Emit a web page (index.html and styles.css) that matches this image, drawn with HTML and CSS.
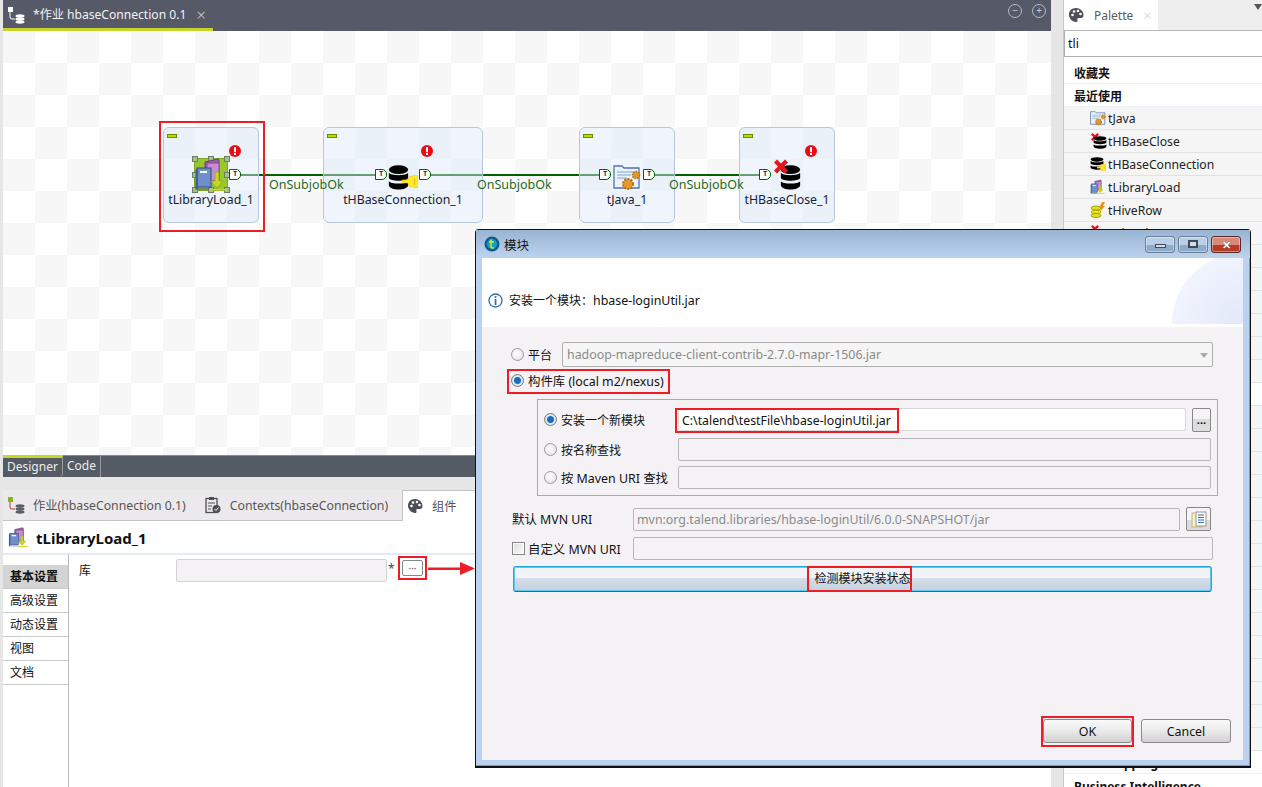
FILE: index.html
```html
<!DOCTYPE html>
<html lang="en">
<head>
  <meta charset="UTF-8" />
  <title>Talend Studio</title>
  <link rel="stylesheet" href="styles.css">
</head>
<body>

<svg class="defs" width="0" height="0">
  <symbol id="i-db" viewBox="0 0 24 24" preserveAspectRatio="none">
    <ellipse cx="12" cy="4.500" rx="11" ry="4.200" fill="#000"/>
    <path d="M1 7.500c2 3 20 3 22 0v5c-2 3.500-20 3.500-22 0z" fill="#000"/>
    <path d="M1 15.500c2 3 20 3 22 0v4c-1 5.500-21 5.500-22 0z" fill="#000"/>
  </symbol>
  <symbol id="i-key" viewBox="0 0 17 13">
    <path d="M0 5h6l2-4h3l1-1h4l1 1v11l-1 1h-4l-1-1H8L6 8H0z" fill="#ffe82e" stroke="#e0c400" stroke-width=".6"/>
    <rect x="13" y="3" width="1" height="7" fill="#d8bc00"/>
  </symbol>
  <symbol id="i-x" viewBox="0 0 14 14">
    <path d="M3 0l4 4 4-4 3 3-4 4 4 4-3 3-4-4-4 4-3-3 4-4-4-4z" fill="#e8141c"/>
  </symbol>
  <symbol id="i-err" viewBox="0 0 12 12">
    <circle cx="6" cy="6" r="6" fill="#ee0a12"/>
    <rect x="5" y="2" width="2" height="5.200" fill="#fff"/>
    <rect x="5" y="8" width="2" height="2" fill="#fff"/>
  </symbol>
  <symbol id="i-book" viewBox="0 0 36 34">
    <path d="M11 4l13-3 1 1v19H11z" fill="#9a5fa8" stroke="#6d4178"/>
    <path d="M13 5h12v18H13z" fill="#c98bd4" stroke="#80508c"/>
    <rect x="3" y="10" width="14" height="19" fill="#6e8fca" stroke="#35497a"/>
    <path d="M1.500 11.500h2v19h12v1H1.500z" fill="#3f5a94"/>
    <rect x="6" y="13" width="7" height="2" fill="#fff"/>
    <path d="M21 14h4v9h4l-6 7-6-7h4z" fill="#c8d62a" stroke="#93a012" stroke-width=".7"/>
    <rect x="15" y="31" width="18" height="1.500" fill="#c8d62a"/>
  </symbol>
  <symbol id="i-java" viewBox="0 0 28 28">
    <path d="M1 3h8l2 2h15v20H1z" fill="#eef3fb" stroke="#4f74ad" stroke-width="1.300"/>
    <path d="M4 9h16M4 12h14M4 15h10" stroke="#7f9fd0"/>
    <circle cx="15" cy="21" r="5" fill="#e39a2d" stroke="#b96f10" stroke-width="2" stroke-dasharray="2 1.200"/>
    <circle cx="23" cy="12" r="3.500" fill="#e39a2d" stroke="#b96f10" stroke-width="1.600" stroke-dasharray="1.600 1"/>
  </symbol>
  <symbol id="i-hive" viewBox="0 0 16 16">
    <ellipse cx="6" cy="6" rx="5" ry="2" fill="#e4e01c" stroke="#a7a30b"/>
    <ellipse cx="6" cy="10" rx="5" ry="2" fill="#e4e01c" stroke="#a7a30b"/>
    <ellipse cx="6" cy="13.500" rx="5" ry="2" fill="#e4e01c" stroke="#a7a30b"/>
    <path d="M12 0l3 0-2 4h2l-5 6 1-4H9z" fill="#f09020"/>
  </symbol>
  <symbol id="i-palette" viewBox="0 0 16 16">
    <path d="M8 1C4 1 1 3.800 1 7.500S4 15 8 15c1.500 0 1.800-1 1.400-2-.4-1.200.2-2 1.400-2H13c1.500 0 2.500-1 2.500-3C15.500 4 12 1 8 1z" fill="#4c4f57"/>
    <circle cx="4.500" cy="8" r="1.300" fill="#fff"/>
    <circle cx="6" cy="4.500" r="1.300" fill="#fff"/>
    <circle cx="10" cy="4" r="1.300" fill="#fff"/>
    <circle cx="12.500" cy="7" r="1.300" fill="#fff"/>
  </symbol>
  <symbol id="i-job" viewBox="0 0 18 18">
    <rect x="1" y="1" width="5" height="5" class="j-head"/>
    <path d="M3 6v5q0 2 2 2h3" class="j-line"/>
    <ellipse cx="13" cy="10" rx="4.500" ry="1.700" class="j-disc"/>
    <ellipse cx="13" cy="13" rx="4.500" ry="1.700" class="j-disc"/>
    <ellipse cx="13" cy="16" rx="4.500" ry="1.700" class="j-disc"/>
  </symbol>
</svg>

<div class="app">
  <div class="edge"></div>

  <div class="left">
    <div class="editor-tabs">
      <div class="editor-tab">
        <svg class="tab-icon" width="18" height="18"><use href="#i-job"/></svg>
        <span>*作业 hbaseConnection 0.1</span>
        <span class="tab-close">×</span>
      </div>
      <div class="editor-ctrl">
        <span class="round-btn">−</span>
        <span class="round-btn">+</span>
      </div>
    </div>

    <div class="canvas">
      <div class="wire wire-1"></div>
      <div class="wire wire-2"></div>
      <div class="wire wire-3"></div>

      <div class="node node-1">
        <span class="flag"></span>
        <label class="name">tLibraryLoad_1</label>
      </div>
      <div class="node node-2">
        <span class="flag"></span>
        <label class="name">tHBaseConnection_1</label>
      </div>
      <div class="node node-3">
        <span class="flag"></span>
        <label class="name">tJava_1</label>
      </div>
      <div class="node node-4">
        <span class="flag"></span>
        <label class="name">tHBaseClose_1</label>
      </div>

      <div class="select-box">
        <i class="h h1"></i><i class="h h2"></i><i class="h h3"></i><i class="h h4"></i>
        <i class="h h5"></i><i class="h h6"></i><i class="h h7"></i><i class="h h8"></i>
      </div>
      <svg class="ico ico-book" width="36" height="34"><use href="#i-book"/></svg>
      <svg class="ico ico-db2" width="21" height="25"><use href="#i-db"/></svg>
      <svg class="ico ico-key" width="16" height="13"><use href="#i-key"/></svg>
      <svg class="ico ico-java" width="28" height="28"><use href="#i-java"/></svg>
      <svg class="ico ico-db4" width="21" height="25"><use href="#i-db"/></svg>
      <svg class="ico ico-x4" width="14" height="15"><use href="#i-x"/></svg>
      <svg class="ico err-1" width="12" height="12"><use href="#i-err"/></svg>
      <svg class="ico err-2" width="12" height="12"><use href="#i-err"/></svg>
      <svg class="ico err-4" width="12" height="12"><use href="#i-err"/></svg>

      <span class="port port-1">T</span>
      <span class="port port-2">T</span>
      <span class="port port-3">T</span>
      <span class="port port-4">T</span>
      <span class="port port-5">T</span>
      <span class="port port-6">T</span>

      <span class="link-label link-1">OnSubjobOk</span>
      <span class="link-label link-2">OnSubjobOk</span>
      <span class="link-label link-3">OnSubjobOk</span>

      <div class="red-frame"></div>
    </div>

    <div class="sub-tabs">
      <span class="sub-tab active">Designer</span>
      <span class="sub-tab">Code</span>
    </div>
    <div class="spacer"></div>

    <div class="view-tabs">
      <div class="view-tab">
        <svg width="18" height="18" class="job-small"><use href="#i-job"/></svg>
        <span>作业(hbaseConnection 0.1)</span>
      </div>
      <div class="view-tab">
        <svg width="18" height="18" viewBox="0 0 18 18">
          <rect x="2" y="2.500" width="11" height="14" fill="none" stroke="#4c4f57" stroke-width="1.300"/>
          <rect x="5" y="1" width="5" height="3" fill="#4c4f57"/>
          <path d="M4 7h7M4 10h4M4 13h3" stroke="#4c4f57"/>
          <circle cx="12.500" cy="13" r="4" fill="#4c4f57"/>
          <path d="M10.500 13l1.500 1.500 2.500-3" fill="none" stroke="#fff"/>
        </svg>
        <span>Contexts(hbaseConnection)</span>
      </div>
      <div class="view-tab current">
        <svg width="16" height="16"><use href="#i-palette"/></svg>
        <span>组件</span>
      </div>
    </div>

    <div class="comp-title">
      <svg width="22" height="21"><use href="#i-book"/></svg>
      <span>tLibraryLoad_1</span>
    </div>

    <div class="comp-body">
      <ul class="side-tabs">
        <li class="on">基本设置</li>
        <li>高级设置</li>
        <li>动态设置</li>
        <li>视图</li>
        <li>文档</li>
      </ul>
      <div class="comp-main">
        <span class="comp-label">库</span>
        <div class="comp-input"></div>
        <span class="star">*</span>
        <span class="mark comp-mark"><button class="mini-btn">···</button></span>
        <svg class="arrow" width="47" height="14" viewBox="0 0 47 14">
          <rect x="0" y="5.500" width="36" height="2.500" fill="#ee1c25"/>
          <path d="M32 0l15 6.500L32 13z" fill="#ee1c25"/>
        </svg>
      </div>
    </div>
  </div>

  <div class="strip"></div>

  <div class="palette">
    <div class="pal-tabs">
      <div class="pal-tab">
        <svg width="16" height="16"><use href="#i-palette"/></svg>
        <span>Palette</span>
        <span class="pal-close">×</span>
      </div>
      <span class="pal-menu"></span>
    </div>
    <div class="pal-search">tli</div>
    <div class="pal-head first">收藏夹</div>
    <div class="pal-head">最近使用</div>
    <ul class="pal-list">
      <li><svg width="16" height="16"><use href="#i-java"/></svg>tJava</li>
      <li><span class="stack"><svg class="s-x" width="8" height="8"><use href="#i-x"/></svg><svg class="s-db" width="14" height="13"><use href="#i-db"/></svg></span>tHBaseClose</li>
      <li><span class="stack"><svg class="s-db2" width="14" height="13"><use href="#i-db"/></svg><svg class="s-key" width="9" height="7"><use href="#i-key"/></svg></span>tHBaseConnection</li>
      <li><svg width="16" height="16"><use href="#i-book"/></svg>tLibraryLoad</li>
      <li><svg width="16" height="16"><use href="#i-hive"/></svg>tHiveRow</li>
      <li><span class="stack"><svg class="s-x" width="8" height="8"><use href="#i-x"/></svg></span>tHiveClose</li>
      <li></li><li></li><li></li><li></li><li></li><li></li>
      <li class="plain"></li>
      <li></li><li></li><li></li><li></li><li></li><li></li><li></li><li></li>
      <li></li><li></li><li></li><li></li><li></li><li></li><li></li>
    </ul>
    <div class="pal-head">Data Mapping</div>
    <div class="pal-head">Business Intelligence</div>
  </div>
</div>

<div class="dialog">
  <div class="dlg-title">
    <svg width="16" height="16" viewBox="0 0 16 16">
      <circle cx="8" cy="8" r="7.500" fill="#0d5c8f"/>
      <circle cx="8" cy="8" r="5" fill="#12a0c8"/>
      <path d="M7 3.500v7q0 2 3 1.500M5 6h5" fill="none" stroke="#e8e020" stroke-width="1.500"/>
    </svg>
    <span class="dlg-name">模块</span>
    <span class="win-btn"><i class="glyph-min"></i></span>
    <span class="win-btn"><i class="glyph-max"></i></span>
    <span class="win-btn close">✕</span>
  </div>
  <div class="dlg-client">
    <div class="dlg-head">
      <svg width="15" height="15" viewBox="0 0 15 15">
        <circle cx="7.500" cy="7.500" r="6.500" fill="#fff" stroke="#2a6fb0" stroke-width="1.300"/>
        <rect x="6.700" y="3" width="1.700" height="1.800" fill="#2a6fb0"/>
        <rect x="6.700" y="6" width="1.700" height="6" fill="#2a6fb0"/>
      </svg>
      <span>安装一个模块：<span class="latin">hbase-loginUtil.jar</span></span>
    </div>
    <div class="dlg-body">
      <div class="row row-platform">
        <label class="opt cjk"><i class="radio"></i>平台</label>
        <div class="combo">hadoop-mapreduce-client-contrib-2.7.0-mapr-1506.jar<i class="caret"></i></div>
      </div>
      <div class="row row-repo">
        <label class="opt mark repo-mark"><i class="radio on"></i>构件库 (local m2/nexus)</label>
      </div>

      <div class="group">
        <div class="g-row">
          <label class="opt g-opt cjk"><i class="radio on"></i>安装一个新模块</label>
          <div class="field white"><span class="mark path-mark">C:\talend\testFile\hbase-loginUtil.jar</span></div>
          <button class="mini-btn tall">...</button>
        </div>
        <div class="g-row r2">
          <label class="opt g-opt cjk"><i class="radio"></i>按名称查找</label>
          <div class="field"></div>
        </div>
        <div class="g-row r3">
          <label class="opt g-opt"><i class="radio"></i>按 Maven URI 查找</label>
          <div class="field"></div>
        </div>
      </div>

      <div class="row row-mvn">
        <span class="mvn-label">默认 MVN URI</span>
        <div class="field grey-text">mvn:org.talend.libraries/hbase-loginUtil/6.0.0-SNAPSHOT/jar</div>
        <button class="mini-btn copy">
          <svg width="16" height="17" viewBox="0 0 16 17">
            <rect x="1" y="2" width="10" height="14" fill="#f3efc8" stroke="#c5b577"/>
            <rect x="5" y="1" width="10" height="14" fill="#fbfbfb" stroke="#9a9a8a"/>
            <path d="M7 4h6M7 6.500h6M7 9h6M7 11.500h6" stroke="#3f6fc0"/>
          </svg>
        </button>
      </div>
      <div class="row row-custom">
        <label class="mvn-label check-label"><i class="check"></i>自定义 MVN URI</label>
        <div class="field"></div>
      </div>
      <button class="check-btn cjk"><span class="mark check-mark">检测模块安装状态</span></button>

      <div class="dlg-foot">
        <span class="mark ok-mark"><button class="push">OK</button></span>
        <button class="push cancel">Cancel</button>
      </div>
    </div>
  </div>
</div>

</body>
</html>
```

FILE: styles.css
```css
* {
  box-sizing: border-box;
}

body {
  margin: 0;
  width: 1262px;
  height: 787px;
  overflow: hidden;
  font-family: "Noto Sans", "Noto Sans CJK SC", sans-serif;
  font-size: 12px;
  color: #111;
  background: #fff;
  position: relative;
}

.defs {
  position: absolute;
}

button {
  font: inherit;
  color: inherit;
  padding: 0;
}

ul {
  list-style: none;
  margin: 0;
  padding: 0;
}

.j-head {
  fill: var(--job-head, #86b81c);
}

.j-line {
  fill: none;
  stroke: var(--job-line, #c0392b);
}

.j-disc {
  fill: var(--job-disc, #5a5e66);
}

.app {
  display: grid;
  grid-template-columns: 3px 1048px 13px 198px;
  height: 787px;
}

.edge {
  background: #e6e6e6;
}

.strip {
  background: #e6e6e6;
  border-right: 1px solid #c8c8c8;
}

.left {
  display: flex;
  flex-direction: column;
  min-width: 0;
}

/* editor tab bar */
.editor-tabs {
  height: 31px;
  flex: none;
  display: flex;
  justify-content: space-between;
  background: #555968;
  color: #fff;
}

.editor-tab {
  width: 210px;
  height: 31px;
  border-bottom: 3px solid #c5d52a;
  display: flex;
  align-items: center;
  padding-left: 4px;
  gap: 8px;
  color: #f2f2f2;
  font-size: 12.100px;
}

.tab-icon {
  --job-head: #fff;
  --job-line: #fff;
  --job-disc: #fff;
  margin-top: 1px;
}

.tab-close {
  font-size: 17px;
  font-weight: 300;
  color: #c8c8d0;
  margin-left: 2px;
}

.editor-ctrl {
  display: flex;
  gap: 10px;
  padding: 4px 5px 0 0;
}

.round-btn {
  width: 14px;
  height: 14px;
  border: 1px solid #b8bac2;
  border-radius: 50%;
  font-size: 10px;
  line-height: 11px;
  text-align: center;
  color: #c8cad0;
}

/* job canvas */
.canvas {
  height: 424px;
  flex: none;
  position: relative;
  background: repeating-conic-gradient(#fff 0 25%, #f6f7f6 0 50%) 0 0 / 64px 64px;
}

.node {
  position: absolute;
  top: 96px;
  width: 96px;
  height: 96px;
  border: 1px solid #b5c8de;
  border-radius: 6px;
  background: rgba(222, 232, 250, 0.45);
}

.node-1 { left: 160px; }
.node-2 { left: 320px; width: 160px; }
.node-3 { left: 576px; }
.node-4 { left: 736px; }

.flag {
  position: absolute;
  left: 3px;
  top: 6px;
  width: 10px;
  height: 4px;
  background: #b5e000;
  border: 1px solid #6f8a00;
}

.name {
  position: absolute;
  left: -10px;
  right: -10px;
  top: 63px;
  text-align: center;
  font-size: 12.300px;
  line-height: 18px;
  color: #14233a;
}

.wire {
  position: absolute;
  top: 143px;
  height: 2px;
  background: #006400;
}

.wire-1 { left: 235px; width: 138px; }
.wire-2 { left: 426px; width: 172px; }
.wire-3 { left: 650px; width: 108px; }

.ico {
  position: absolute;
}

.ico-book { left: 191px; top: 127px; }
.ico-db2 { left: 385px; top: 134px; }
.ico-key { left: 399px; top: 144px; }
.ico-java { left: 610px; top: 132px; }
.ico-db4 { left: 777px; top: 134px; }
.ico-x4 { left: 771px; top: 128px; }
.err-1 { left: 226px; top: 114px; }
.err-2 { left: 418px; top: 114px; }
.err-4 { left: 802px; top: 114px; }

.select-box {
  position: absolute;
  left: 191px;
  top: 127px;
  width: 34px;
  height: 33px;
  background: #97c92d;
  border: 1px solid #7ea522;
}

.h {
  position: absolute;
  width: 6px;
  height: 6px;
  background: #a3c08f;
  border: 1px solid #6f7f66;
}

.h1 { left: -3px; top: -3px; }
.h2 { left: 13px; top: -3px; }
.h3 { right: -3px; top: -3px; }
.h4 { left: -3px; top: 13px; }
.h5 { right: -3px; top: 13px; }
.h6 { left: -3px; bottom: -3px; }
.h7 { left: 13px; bottom: -3px; }
.h8 { right: -3px; bottom: -3px; }

.port {
  position: absolute;
  top: 138px;
  width: 12px;
  height: 11px;
  background: #fff;
  border: 1px solid #006400;
  border-radius: 0 5px 5px 0;
  font-family: "DejaVu Sans Mono", monospace;
  font-size: 7px;
  font-weight: bold;
  line-height: 9px;
  text-align: center;
  color: #222;
}

.port-1 { left: 226px; }
.port-2 { left: 372px; }
.port-3 { left: 416px; }
.port-4 { left: 596px; }
.port-5 { left: 640px; }
.port-6 { left: 756px; }

.link-label {
  position: absolute;
  top: 145px;
  font-size: 12.500px;
  line-height: 18px;
  color: #1c6b2a;
}

.link-1 { left: 266px; }
.link-2 { left: 474px; }
.link-3 { left: 666px; }

.red-frame {
  position: absolute;
  left: 156px;
  top: 90px;
  width: 106px;
  height: 111px;
  border: 2px solid #ee1c25;
}

/* bottom views */
.sub-tabs {
  height: 22px;
  flex: none;
  display: flex;
  background: #555b65;
  border-top: 1px solid #8a8a8a;
  color: #eee;
}

.sub-tab {
  padding: 0 4px;
  line-height: 19px;
  border-right: 1px solid #9a9a9a;
}

.sub-tab.active {
  width: 60px;
  border-top: 3px solid #c5d52a;
  margin-top: -1px;
  line-height: 17px;
  border-radius: 0 0 4px 0;
}

.spacer {
  height: 13px;
  flex: none;
  background: #e6e6e6;
}

.view-tabs {
  height: 31px;
  flex: none;
  display: flex;
  background: #ece9ec;
  border-bottom: 1px solid #c4c4c4;
  color: #555;
  font-size: 12.250px;
}

.view-tab {
  display: flex;
  align-items: center;
  gap: 8px;
  padding-left: 4px;
  margin-right: 14px;
}

.job-small {
  --job-head: #86b81c;
  --job-line: #c0392b;
  --job-disc: #5a5e66;
}

.view-tab.current {
  background: #fff;
  flex: 1;
  margin: 0;
  padding-left: 4px;
  gap: 9px;
  border: 1px solid #c4c4c4;
  border-bottom: 0;
  height: 31px;
}

.comp-title {
  height: 34px;
  flex: none;
  display: flex;
  align-items: center;
  gap: 6px;
  padding: 1px 0 0 5px;
  border-bottom: 2px solid #e4eaf8;
  font-size: 15px;
  font-weight: bold;
  color: #111;
}

.comp-body {
  flex: 1;
  display: flex;
}

.side-tabs {
  width: 66px;
  flex: none;
  padding-top: 10px;
  border-right: 1px solid #bbb;
}

.side-tabs li {
  height: 24px;
  padding-left: 7px;
  line-height: 23px;
  border-bottom: 1px solid #ccc;
}

.side-tabs li.on {
  background: #d4d4d4;
  font-weight: bold;
}

.comp-main {
  flex: 1;
  display: flex;
  align-items: flex-start;
  padding: 4px 0 0 10px;
}

.comp-label {
  width: 97px;
  line-height: 23px;
}

.comp-input {
  width: 211px;
  height: 23px;
  background: #f5f2f6;
  border: 1px solid #d4d4d4;
  border-radius: 2px;
}

.star {
  width: 11px;
  padding-left: 1px;
  color: #33475f;
  line-height: 20px;
}

.comp-mark {
  padding: 2px;
  margin-top: -3px;
  height: 24px;
}

.mark {
  border: 2px solid #ee1c25;
}

.mini-btn {
  display: block;
  width: 21px;
  height: 16px;
  background: #fff;
  border: 1px solid #888;
  border-radius: 2px;
  font-size: 10px;
  line-height: 11px;
  color: #555;
}

.arrow {
  margin: 3px 0 0 1px;
  flex: none;
}

/* palette */
.palette {
  display: flex;
  flex-direction: column;
  overflow: hidden;
}

.pal-tabs {
  height: 31px;
  flex: none;
  display: flex;
  justify-content: space-between;
  background: #eeeeee;
  border-bottom: 1px solid #b8b8b8;
}

.pal-tab {
  width: 94px;
  display: flex;
  align-items: center;
  gap: 10px;
  padding-left: 4px;
  background: #fff;
  color: #555c6a;
}

.pal-close {
  font-size: 15px;
  color: #ddd;
}

.pal-menu {
  width: 0;
  height: 0;
  margin: 4px 0 0 0;
  border: 4px solid transparent;
  border-top: 6px solid #555;
  border-bottom: 0;
}

.pal-search {
  height: 26px;
  flex: none;
  padding-left: 3px;
  line-height: 26px;
  border: 1px solid #b0b0b0;
  border-top: 0;
  border-right: 0;
  font-size: 12.500px;
}

.pal-head {
  height: 23px;
  flex: none;
  padding: 1px 0 0 10px;
  line-height: 24px;
  font-weight: bold;
  border-bottom: 1px solid #eef1f8;
  color: #111;
}

.pal-head.first {
  margin-top: 4px;
}

.pal-list li {
  height: 23px;
  display: flex;
  align-items: center;
  gap: 2px;
  padding-left: 26px;
  background: #f5f5f5;
  border-bottom: 1px solid #e2e2e2;
  font-size: 12.200px;
  color: #222;
}

.pal-list li.plain {
  background: #fff;
}

.stack {
  position: relative;
  width: 16px;
  height: 16px;
  flex: none;
}

.stack svg {
  position: absolute;
}

.s-x { left: 1px; top: 0; }
.s-db { left: 3px; top: 3px; }
.s-db2 { left: 0; top: 1px; }
.s-key { left: 7px; top: 8px; }

/* module dialog */
.dialog {
  position: absolute;
  left: 475px;
  top: 229px;
  width: 776px;
  height: 539px;
  display: flex;
  flex-direction: column;
  padding: 0 7px 6px 6px;
  background: #bad2ef;
  border: 1px solid #111;
  border-bottom: 2px solid #111;
  border-radius: 4px 4px 0 0;
  box-shadow: inset 0 -1px 0 #2cc0d8, inset -1px 0 0 #2cc0d8;
}

.dlg-title {
  height: 28px;
  flex: none;
  display: flex;
  align-items: center;
  margin: 0 -7px 0 -6px;
  padding: 0 9px 0 8px;
  background: linear-gradient(#98b4d2, #bcd3ef);
}

.dlg-name {
  flex: 1;
  margin-left: 4px;
  font-size: 12.500px;
  color: #111;
}

.win-btn {
  width: 30px;
  height: 17px;
  margin-left: 3px;
  display: flex;
  align-items: center;
  justify-content: center;
  border: 1px solid #6d7f94;
  border-radius: 3px;
  background: linear-gradient(#b9cfe6 0 50%, #8eabc9 50% 100%);
  box-shadow: inset 0 0 0 1px rgba(255, 255, 255, 0.4);
}

.win-btn.close {
  border-color: #5a2a28;
  background: linear-gradient(#d9897a 0 50%, #b83a24 50% 100%);
  color: #fff;
  font-size: 11px;
  font-weight: bold;
  text-shadow: 0 0 1px #333;
}

.glyph-min {
  width: 11px;
  height: 4px;
  margin-top: 4px;
  background: #d5dce6;
  border: 1px solid #3c4a5a;
}

.glyph-max {
  width: 10px;
  height: 8px;
  background: #d5dce6;
  border: 2px solid #3c4a5a;
}

.dlg-client {
  flex: 1;
  display: flex;
  flex-direction: column;
}

.dlg-head {
  height: 69px;
  flex: none;
  display: flex;
  align-items: center;
  gap: 6px;
  padding: 15px 0 0 6px;
  background: radial-gradient(circle at 100% 100%, #e2e8fb 0, #f1f4fd 70%, #fff 71%) right 0 bottom 3px / 76px 66px no-repeat #fff;
}

.latin {
  font-size: 12.400px;
}

.dlg-body {
  flex: 1;
  display: flex;
  flex-direction: column;
  background: #f5f2f6;
  font-size: 12.400px;
}

.cjk {
  font-size: 12px;
}

.row {
  display: flex;
  align-items: center;
}

.row-platform {
  height: 25px;
  margin: 15px 30px 0 29px;
}

.row-repo {
  height: 25px;
  margin: 2px 30px 0 25px;
}

.opt {
  display: flex;
  align-items: center;
  gap: 4px;
  white-space: nowrap;
}

.row-platform .opt {
  width: 51px;
  flex: none;
}

.repo-mark {
  width: 163px;
  height: 25px;
  padding: 0 0 2px 2px;
}

.radio {
  width: 13px;
  height: 13px;
  flex: none;
  border-radius: 50%;
  border: 1px solid #9a9a9a;
  background: radial-gradient(circle at 40% 40%, #fff, #ddd);
}

.radio.on {
  background: radial-gradient(circle, #1c6db8 0 3px, #d8e8f4 4px);
  border-color: #777;
}

.combo {
  flex: 1;
  height: 25px;
  position: relative;
  padding-left: 4px;
  line-height: 23px;
  background: #f5f5f5;
  border: 1px solid #b0b0b0;
  border-radius: 2px;
  color: #8a8a8a;
}

.caret {
  position: absolute;
  right: 4px;
  top: 10px;
  border: 4px solid transparent;
  border-top: 5px solid #aaa;
  border-bottom: 0;
}

.group {
  height: 97px;
  flex: none;
  margin: 5px 25px 0 55px;
  padding: 8px 6px 0 6px;
  border: 1px solid #aaa;
}

.g-row {
  display: flex;
  align-items: center;
  height: 23px;
}

.g-row.r2 {
  margin-top: 7px;
}

.g-row.r3 {
  margin-top: 5px;
}

.g-opt {
  width: 134px;
  flex: none;
}

.field {
  flex: 1;
  min-width: 0;
  height: 23px;
  display: flex;
  align-items: flex-start;
  padding-left: 3px;
  line-height: 21px;
  background: #f5f2f6;
  border: 1px solid #b8b8b8;
  border-radius: 2px;
}

.field.white {
  background: #fff;
  border-color: #d8d8d8;
  margin-right: 6px;
}

.grey-text {
  color: #8a8a8a;
}

.path-mark {
  height: 25px;
  margin: -1px 0 0 -7px;
  padding: 0 6px 0 5px;
  line-height: 21px;
  font-size: 12.300px;
  white-space: nowrap;
}

.mini-btn.tall {
  flex: none;
  width: 19px;
  height: 24px;
  background: linear-gradient(#f4f4f4 0 45%, #dcdcdc 45% 100%);
  color: #111;
  font-size: 11px;
  font-weight: bold;
}

.row-mvn {
  height: 24px;
  margin: 11px 32px 0 30px;
}

.mvn-label {
  width: 121px;
  flex: none;
}

.check-label {
  display: flex;
  align-items: center;
  gap: 3px;
}

.check {
  width: 13px;
  height: 13px;
  flex: none;
  border: 1px solid #888;
  background: linear-gradient(135deg, #ddd, #fafafa);
  box-shadow: inset 0 0 0 1px #fff;
}

.mini-btn.copy {
  flex: none;
  width: 25px;
  height: 24px;
  margin-left: 6px;
  background: linear-gradient(#f4f4f4 0 55%, #dcdcdc 55% 100%);
  display: flex;
  align-items: center;
  justify-content: center;
}

.row-custom {
  height: 23px;
  margin: 6px 30px 0 30px;
}

.check-btn {
  height: 26px;
  flex: none;
  margin: 6px 31px 0 31px;
  display: flex;
  justify-content: center;
  align-items: center;
  border: 1px solid #27a7e0;
  border-bottom-color: #1c6f9e;
  border-radius: 3px;
  background: linear-gradient(#f2f3f7 0 45%, #d6dfe9 45%, #c2d0de 100%);
  box-shadow: inset 0 0 0 1px #5cc8ee;
  color: #111;
}

.check-mark {
  width: 105px;
  height: 26px;
  padding-left: 6px;
  margin-left: -7px;
  line-height: 22px;
  white-space: nowrap;
}

.dlg-foot {
  margin-top: auto;
  display: flex;
  align-items: flex-end;
  justify-content: flex-end;
  gap: 7px;
  padding: 0 12px 13px 0;
}

.ok-mark {
  width: 93px;
  height: 31px;
  padding-top: 1px;
}

.push {
  display: block;
  width: 89px;
  height: 24px;
  border: 1px solid #8a8a8a;
  border-radius: 3px;
  background: linear-gradient(#fafafa 0, #ececec 45%, #d0d0d0 100%);
}

.push.cancel {
  width: 90px;
  margin-bottom: 4px;
}
```
